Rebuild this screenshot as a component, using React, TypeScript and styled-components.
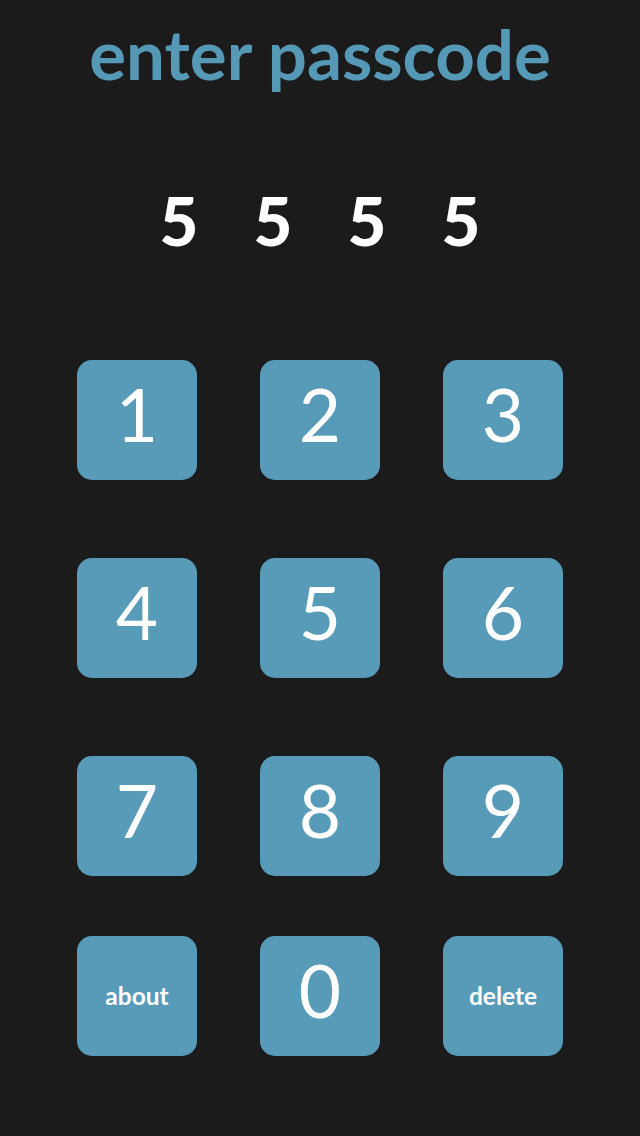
import React from "react";
import styled, { createGlobalStyle } from "styled-components";

const GlobalStyle = createGlobalStyle`
  html, body {
    margin: 0;
    padding: 0;
    background: #1b1b1b;
  }
  body {
    font-family: Lato, "Open Sans", sans-serif;
  }
`;

const Page = styled.div`
  width: 640px;
  height: 1136px;
  background: #1b1b1b;
  display: flex;
  flex-direction: column;
  align-items: center;
  overflow: hidden;
`;

const Title = styled.h1`
  margin: 18px 0 0;
  font-family: Lato, sans-serif;
  font-weight: 700;
  font-size: 69px;
  line-height: 72px;
  color: #5599b7;
  letter-spacing: 0;
  white-space: nowrap;
`;

const CodeRow = styled.div`
  margin-top: 97px;
  display: flex;
`;

const CodeDigit = styled.span`
  width: 94px;
  text-align: center;
  font-family: Lato, sans-serif;
  font-weight: 900;
  font-size: 67px;
  line-height: 66px;
  color: #ffffff;
`;

const Keypad = styled.div`
  margin-top: 107px;
  display: flex;
  flex-direction: column;
  gap: 78px;
`;

const KeyRow = styled.div<{ $pull?: number }>`
  display: grid;
  grid-template-columns: repeat(3, 120px);
  column-gap: 63px;
  margin-top: ${(p) => (p.$pull ? `-${p.$pull}px` : "0")};
`;

const Key = styled.button<{ $small?: boolean }>`
  width: 120px;
  height: 120px;
  border: none;
  border-radius: 15px;
  background: #579bb8;
  color: #ffffff;
  display: flex;
  align-items: center;
  justify-content: center;
  padding: ${(p) => (p.$small ? "0" : "0 0 11px")};
  font-family: Lato, sans-serif;
  font-weight: ${(p) => (p.$small ? 700 : 400)};
  font-size: ${(p) => (p.$small ? "24.5px" : "73px")};
  line-height: 1;
  cursor: pointer;
`;

const rows: string[][] = [
  ["1", "2", "3"],
  ["4", "5", "6"],
  ["7", "8", "9"],
];

export default function App() {
  return (
    <>
      <GlobalStyle />
      <Page>
        <Title>enter passcode</Title>
        <CodeRow>
          {["5", "5", "5", "5"].map((d, i) => (
            <CodeDigit key={i}>{d}</CodeDigit>
          ))}
        </CodeRow>
        <Keypad>
          {rows.map((r, i) => (
            <KeyRow key={i}>
              {r.map((k) => (
                <Key key={k}>{k}</Key>
              ))}
            </KeyRow>
          ))}
          <KeyRow $pull={18}>
            <Key $small>about</Key>
            <Key>0</Key>
            <Key $small>delete</Key>
          </KeyRow>
        </Keypad>
      </Page>
    </>
  );
}
